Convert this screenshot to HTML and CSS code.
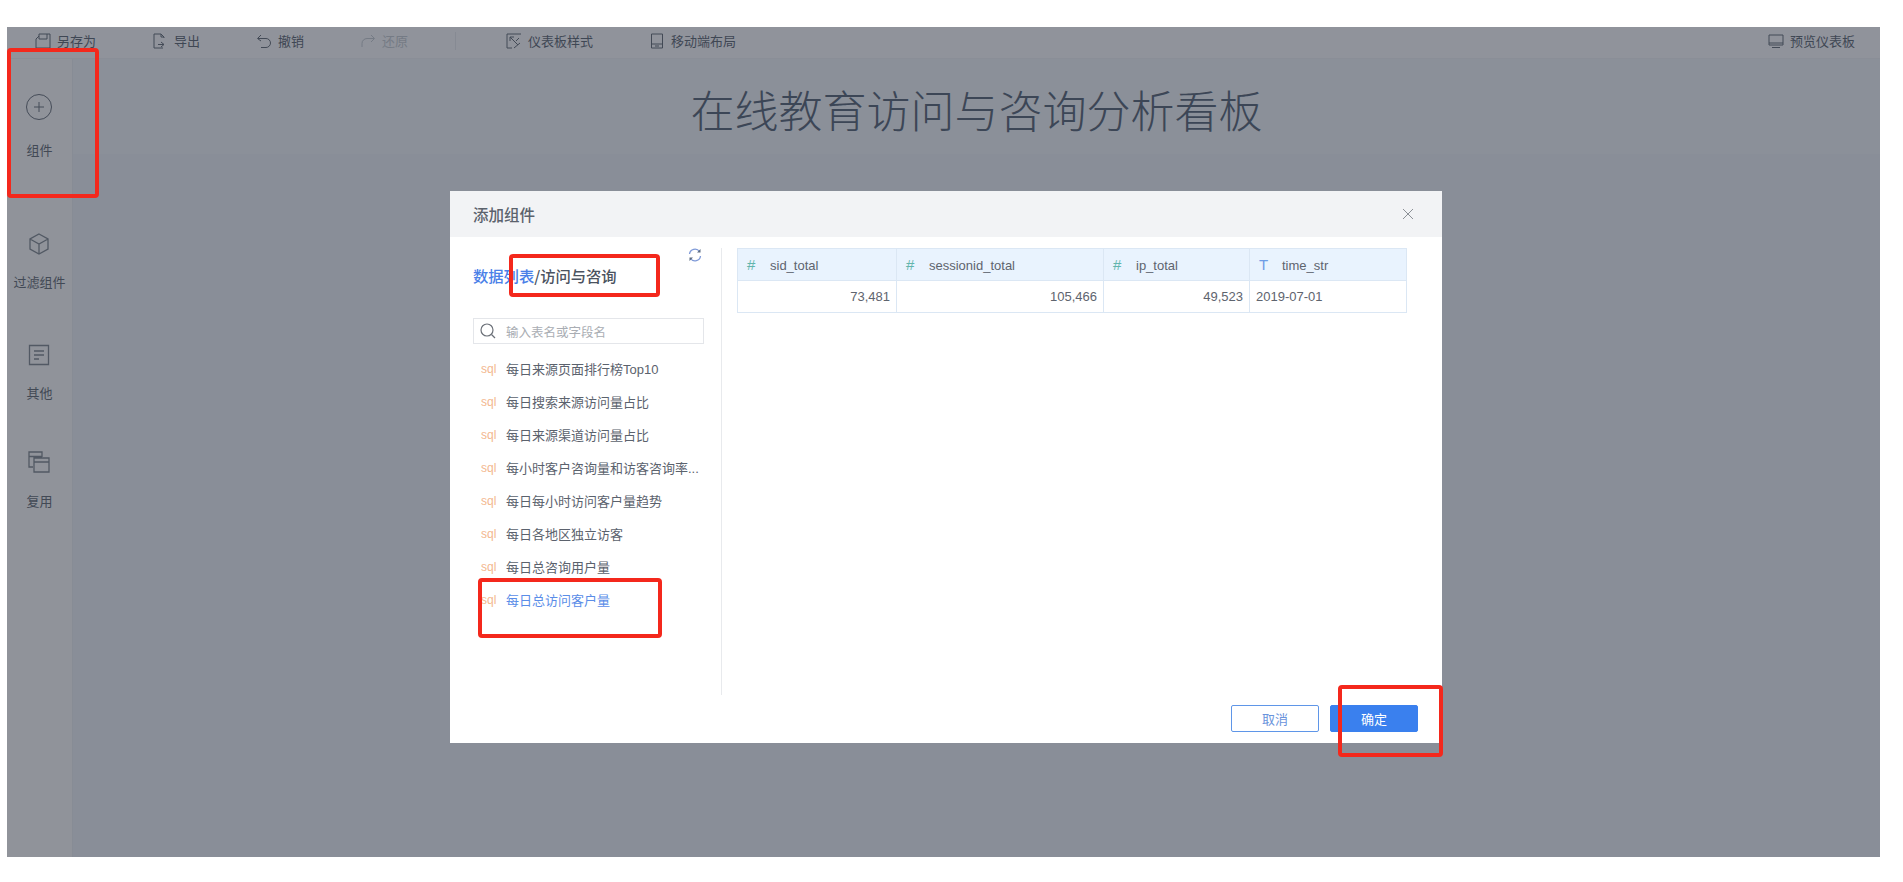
FILE: index.html
```html
<!DOCTYPE html>
<html>

<head>
  <meta charset="utf-8">
  <title>在线教育访问与咨询分析看板</title>
  <link rel="stylesheet" href="styles.css">
</head>

<body>
  <div class="frame">
    <div class="toolbar">
      <div class="tool">
        <svg class="tool-icon" viewBox="0 0 16 16"><path d="M1 6v9h14V1H4v5h8V1M1 6l3-3"/></svg>
        <span>另存为</span>
      </div>
      <div class="tool">
        <svg class="tool-icon" viewBox="0 0 16 16"><path d="M12 5V4L9 1H2v14h9M9 1v3h3M9 9l3 2.500L9 14M6 11.500h6"/></svg>
        <span>导出</span>
      </div>
      <div class="tool">
        <svg class="tool-icon" viewBox="0 0 16 16"><path d="M5 2L1.500 5.500L5 8M2 5.500h8a4 4 0 0 1 0 9H5"/></svg>
        <span>撤销</span>
      </div>
      <div class="tool tool-disabled">
        <svg class="tool-icon" viewBox="0 0 16 16"><path d="M11 2l3.500 3.500L11 9M14 5.500H7a5 5 0 0 0-5 5V14"/></svg>
        <span>还原</span>
      </div>
      <div class="tool-sep"></div>
      <div class="tool">
        <svg class="tool-icon" viewBox="0 0 16 16"><path d="M15 1H1v14h5M4 4l8 8M4 4h4M4 4v4M13 5l-3 3M8 15l6-5"/></svg>
        <span>仪表板样式</span>
      </div>
      <div class="tool">
        <svg class="tool-icon" viewBox="0 0 16 16"><path d="M2.500 1h11v14h-11zM2.500 11h11M6 13h4"/></svg>
        <span>移动端布局</span>
      </div>
      <div class="tool tool-right">
        <svg class="tool-icon" viewBox="0 0 16 16"><path d="M1 2h14v10H1zM1 10h14M4 14.500h8"/></svg>
        <span>预览仪表板</span>
      </div>
    </div>

    <div class="workspace">
      <div class="sidebar">
        <div class="side-item side-add">
          <svg class="side-icon-big" viewBox="0 0 26 26"><circle cx="13" cy="13" r="12.500"/><path d="M13 8v10M8 13h10"/></svg>
          <span>组件</span>
        </div>
        <div class="side-item side-filter">
          <svg class="side-icon" viewBox="0 0 22 22"><path d="M11 1l9 5v10l-9 5-9-5V6zM2 6l9 5 9-5M11 11v10"/></svg>
          <span>过滤组件</span>
        </div>
        <div class="side-item side-other">
          <svg class="side-icon" viewBox="0 0 22 22"><path d="M1.500 1.500h19v19h-19zM6 7h10M6 11h10M6 15h5"/></svg>
          <span>其他</span>
        </div>
        <div class="side-item side-reuse">
          <svg class="side-icon" viewBox="0 0 22 22"><path d="M5 16H1V1h13v5M1 5.500h13M6 7h15v14H6zM6 11h15"/></svg>
          <span>复用</span>
        </div>
      </div>
      <div class="canvas">
        <div class="title-band">
          <h1 class="title">在线教育访问与咨询分析看板</h1>
        </div>
      </div>
    </div>

    <div class="modal">
      <div class="modal-head">
        <span class="modal-title">添加组件</span>
        <svg class="modal-close" viewBox="0 0 12 12"><path d="M1 1l10 10M11 1L1 11"/></svg>
      </div>
      <div class="modal-body">
        <div class="data-pane">
          <div class="crumb-row">
            <div class="crumb"><span class="crumb-link">数据列表</span>/访问与咨询</div>
            <svg class="refresh" viewBox="0 0 14 14"><path d="M1.500 6A5.500 5.500 0 0 1 11.500 3.500"/><path d="M12.500 8A5.500 5.500 0 0 1 2.500 10.500"/><path class="refresh-tip" d="M12.500 1v3.500H9zM1.500 13V9.500H5z"/></svg>
          </div>
          <div class="search">
            <svg class="search-icon" viewBox="0 0 16 16"><circle cx="7" cy="7" r="6"/><path d="M11.500 11.500L15 15"/></svg>
            <span>输入表名或字段名</span>
          </div>
          <ul class="table-list">
            <li><span class="sql">sql</span><span class="table-name">每日来源页面排行榜Top10</span></li>
            <li><span class="sql">sql</span><span class="table-name">每日搜索来源访问量占比</span></li>
            <li><span class="sql">sql</span><span class="table-name">每日来源渠道访问量占比</span></li>
            <li><span class="sql">sql</span><span class="table-name">每小时客户咨询量和访客咨询率...</span></li>
            <li><span class="sql">sql</span><span class="table-name">每日每小时访问客户量趋势</span></li>
            <li><span class="sql">sql</span><span class="table-name">每日各地区独立访客</span></li>
            <li><span class="sql">sql</span><span class="table-name">每日总咨询用户量</span></li>
            <li class="active"><span class="sql">sql</span><span class="table-name">每日总访问客户量</span></li>
          </ul>
        </div>
        <div class="preview">
          <table class="preview-table">
            <thead>
              <tr>
                <th class="col-sid"><span class="type-num">#</span>sid_total</th>
                <th class="col-session"><span class="type-num">#</span>sessionid_total</th>
                <th class="col-ip"><span class="type-num">#</span>ip_total</th>
                <th class="col-time"><span class="type-text">T</span>time_str</th>
              </tr>
            </thead>
            <tbody>
              <tr>
                <td class="num">73,481</td>
                <td class="num">105,466</td>
                <td class="num">49,523</td>
                <td>2019-07-01</td>
              </tr>
            </tbody>
          </table>
        </div>
      </div>
      <div class="modal-foot">
        <button class="btn btn-cancel">取消</button>
        <button class="btn btn-ok">确定</button>
      </div>
    </div>
  </div>

  <div class="mark mark-add"></div>
  <div class="mark mark-crumb"></div>
  <div class="mark mark-item"></div>
  <div class="mark mark-ok"></div>
</body>

</html>
```

FILE: styles.css
```css
* {
  box-sizing: border-box;
}
html, body {
  margin: 0;
  height: 100%;
}
body {
  position: relative;
  overflow: hidden;
  background: #fff;
  padding: 27px 23px 25px 7px;
  font-family: "Liberation Sans", "Noto Sans CJK SC", sans-serif;
  font-size: 13px;
  color: #3f4754;
}
.frame {
  position: relative;
  height: 100%;
  display: flex;
  flex-direction: column;
  background: #898e98;
}

/* toolbar */
.toolbar {
  display: flex;
  align-items: center;
  gap: 56px;
  height: 32px;
  flex-shrink: 0;
  padding: 0 25px 4px 28px;
  background: #90939b;
  border-bottom: 1px solid #8a8e97;
}
.tool {
  display: flex;
  align-items: center;
  gap: 6px;
}
.tool-disabled {
  color: #757b85;
}
.tool-disabled .tool-icon {
  stroke: #757b85;
}
.tool-sep {
  width: 1px;
  height: 18px;
  margin: 0 -6px 0 -9px;
  background: #868a93;
}
.tool-right {
  margin-left: auto;
}
.tool-icon {
  width: 16px;
  height: 16px;
  fill: none;
  stroke: #434a56;
  stroke-width: 1;
}

/* sidebar */
.workspace {
  display: flex;
  flex: 1;
  min-height: 0;
}
.sidebar {
  width: 66px;
  flex-shrink: 0;
  display: flex;
  flex-direction: column;
  align-items: center;
  background: #90939a;
  border-right: 1px solid #878c95;
}
.side-item {
  display: flex;
  flex-direction: column;
  align-items: center;
  font-size: 13px;
  line-height: 18px;
  white-space: nowrap;
  color: #424955;
}
.side-add {
  margin-top: 35px;
  gap: 22px;
}
.side-filter {
  margin-top: 73px;
  gap: 19px;
}
.side-other {
  margin-top: 52px;
  gap: 19px;
}
.side-reuse {
  margin-top: 48px;
  gap: 20px;
}
.side-icon-big {
  width: 26px;
  height: 26px;
  fill: none;
  stroke: #454c58;
  stroke-width: 1;
}
.side-icon {
  width: 22px;
  height: 22px;
  fill: none;
  stroke: #525964;
  stroke-width: 1.300;
}

/* canvas */
.canvas {
  flex: 1;
}
.title-band {
  height: 95px;
  display: flex;
  align-items: center;
  justify-content: center;
  padding-top: 12px;
  background: #8b9099;
}
.title {
  margin: 0;
  font-size: 44px;
  font-weight: 300;
  line-height: 60px;
  color: #3c4656;
}

/* dialog */
.modal {
  position: absolute;
  left: 443px;
  top: 164px;
  width: 992px;
  height: 552px;
  display: flex;
  flex-direction: column;
  background: #fff;
}
.modal-head {
  height: 46px;
  flex-shrink: 0;
  display: flex;
  align-items: center;
  justify-content: space-between;
  padding: 0 28px 0 23px;
  background: #f2f3f5;
}
.modal-title {
  font-family: "Noto Sans CJK SC", sans-serif;
  font-size: 15.500px;
  font-weight: 500;
  color: #5b626c;
}
.modal-close {
  width: 12px;
  height: 12px;
  fill: none;
  stroke: #8c9096;
}
.modal-body {
  flex: 1;
  display: flex;
  min-height: 0;
}
.data-pane {
  width: 272px;
  margin-top: 11px;
  padding: 0 17px 0 23px;
  border-right: 1px solid #e8eaed;
}
.crumb-row {
  position: relative;
  height: 70px;
  padding-top: 15px;
}
.crumb {
  font-family: "Noto Sans CJK SC", sans-serif;
  font-size: 15.300px;
  font-weight: 500;
  line-height: 24px;
  color: #4b5360;
}
.crumb-link {
  color: #4a80e8;
}
.refresh {
  position: absolute;
  right: 2px;
  top: 0;
  width: 14px;
  height: 14px;
  fill: none;
  stroke: #7f9ad8;
  stroke-width: 1.300;
}
.refresh-tip {
  fill: #5a6a80;
  stroke: none;
}
.search {
  display: flex;
  align-items: center;
  gap: 10px;
  height: 26px;
  padding-left: 6px;
  border: 1px solid #e4e6ea;
  font-size: 12.500px;
  color: #a9adb3;
}
.search-icon {
  width: 16px;
  height: 16px;
  fill: none;
  stroke: #6b7078;
  stroke-width: 1.200;
}
.table-list {
  list-style: none;
  margin: 8px 0 0;
  padding: 0;
}
.table-list li {
  display: flex;
  align-items: center;
  gap: 7px;
  height: 33px;
  padding-left: 8px;
  white-space: nowrap;
  color: #5b626d;
}
.table-list li.active {
  color: #5a8de8;
}
.sql {
  width: 18px;
  font-size: 12px;
  color: #f3b88f;
}

/* data preview */
.preview {
  flex: 1;
  padding: 11px 0 0 15px;
}
.preview-table {
  border-collapse: collapse;
  table-layout: fixed;
  width: 670px;
  font-size: 13px;
  color: #5e646e;
}
.preview-table th,
.preview-table td {
  height: 32px;
  padding: 0 6px;
  border: 1px solid #dbe7f4;
  text-align: left;
  font-weight: normal;
}
.preview-table th {
  background: #e9f3fe;
  padding-left: 9px;
}
.preview-table td.num {
  text-align: right;
}
.col-sid {
  width: 159px;
}
.col-session {
  width: 207px;
}
.col-ip {
  width: 146px;
}
.type-num,
.type-text {
  display: inline-block;
  width: 23px;
  font-size: 15px;
  color: #62b5ad;
}
.type-text {
  color: #6f9de6;
}

.modal-foot {
  height: 48px;
  flex-shrink: 0;
  display: flex;
  justify-content: flex-end;
  gap: 11px;
  padding: 10px 24px 0 0;
}
.btn {
  width: 88px;
  height: 27px;
  padding: 0;
  border-radius: 2px;
  font: inherit;
  font-size: 13px;
}
.btn-cancel {
  background: #fff;
  border: 1px solid #5f96e8;
  color: #6a93dc;
}
.btn-ok {
  background: #3a80ee;
  border: 1px solid #3a80ee;
  color: #fff;
}

/* red annotation boxes drawn over the screenshot */
.mark {
  position: absolute;
  border: 4px solid #f4281c;
  border-radius: 4px;
}
.mark-add {
  left: 7px;
  top: 48px;
  width: 92px;
  height: 150px;
}
.mark-crumb {
  left: 509px;
  top: 254px;
  width: 151px;
  height: 43px;
}
.mark-item {
  left: 478px;
  top: 578px;
  width: 184px;
  height: 60px;
}
.mark-ok {
  left: 1338px;
  top: 685px;
  width: 105px;
  height: 72px;
}
```
